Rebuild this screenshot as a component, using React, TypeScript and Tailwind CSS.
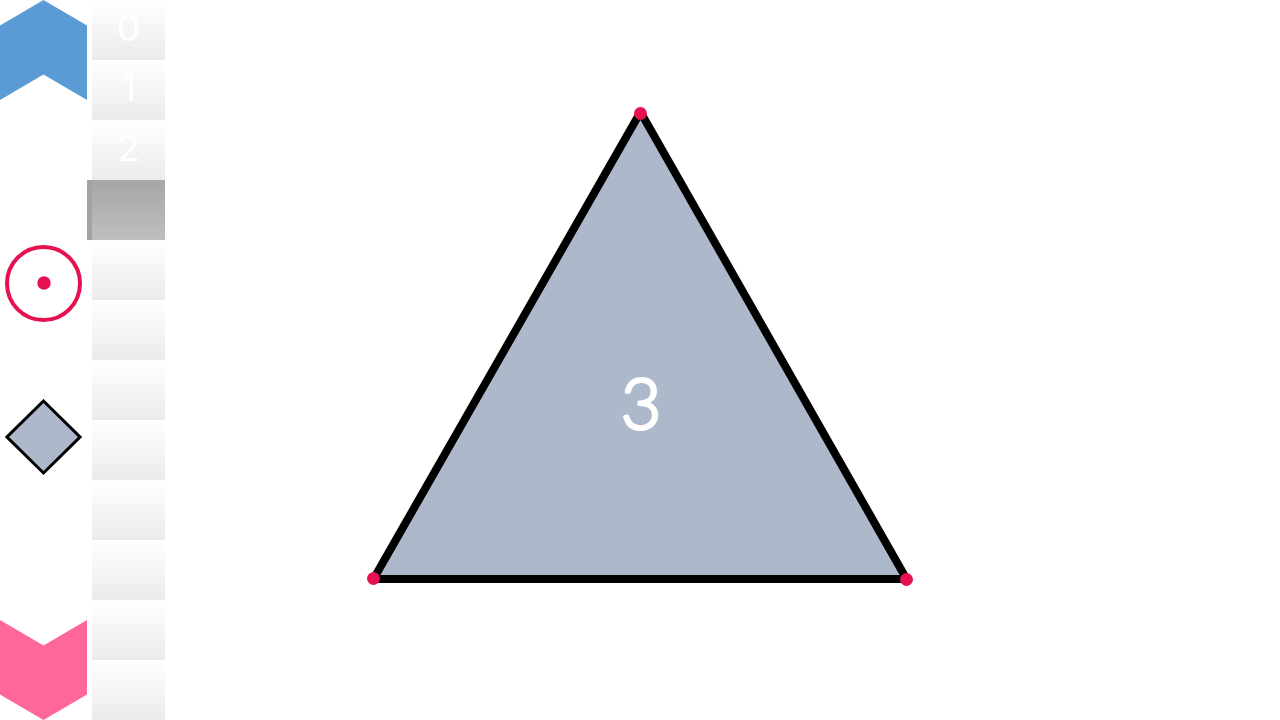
const cells = ['0', '1', '2', '3', '', '', '', '', '', '', '', ''];
const selected = 3;

function Digit({ value }: { value: string }) {
  return (
    <span className="font-['Inter',sans-serif] text-[37px] leading-none font-normal text-white">
      {value}
    </span>
  );
}

function Toolbar() {
  return (
    <nav aria-label="Tools" className="flex w-[87px] shrink-0 flex-col items-center justify-between">
      <button type="button" aria-label="Previous" className="block w-full">
        <svg viewBox="0 0 87 100" className="block w-full">
          <path d="M0 25.5 43.5 0 87 25.5V100L43.5 74.5 0 100Z" fill="#5b9bd5" />
        </svg>
      </button>
      <div className="flex flex-col gap-[77px]">
        <button type="button" aria-label="Points" className="block">
          <svg viewBox="0 0 77 77" className="block size-[77px]">
            <circle cx="38.5" cy="38.5" r="36.5" fill="#fff" stroke="#e6124f" strokeWidth="4" />
            <circle cx="39" cy="38" r="6.7" fill="#e6124f" />
          </svg>
        </button>
        <button type="button" aria-label="Shapes" className="block">
          <svg viewBox="0 0 77 77" className="block size-[77px]">
            <path d="M38.5 2 75 38 38.5 74 2 38Z" fill="#adb8cb" stroke="#000" strokeWidth="3" />
          </svg>
        </button>
      </div>
      <button type="button" aria-label="Next" className="block w-full">
        <svg viewBox="0 0 87 100" className="block w-full">
          <path d="M0 0 43.5 25.5 87 0V74.5L43.5 100 0 74.5Z" fill="#ff6699" />
        </svg>
      </button>
    </nav>
  );
}

function NumberStrip() {
  return (
    <div className="grid w-[78px] shrink-0 grid-rows-12">
      {cells.map((value, i) =>
        i === selected ? (
          <button
            key={i}
            type="button"
            aria-label={value}
            aria-pressed="true"
            className="border-l-5 border-[#a3a3a3] bg-linear-to-b from-[#a6a6a6] to-[#bfbfbf]"
          />
        ) : (
          <button
            key={i}
            type="button"
            aria-label={value || 'Empty'}
            className="ml-[5px] flex items-center justify-center bg-linear-to-b from-white to-[#ebebeb] pb-1.5"
          >
            <Digit value={value} />
          </button>
        ),
      )}
    </div>
  );
}

function Canvas() {
  const points = [
    [475.5, 113.5],
    [208.5, 578.5],
    [741.5, 579.5],
  ];
  return (
    <main className="flex min-w-0 flex-1 items-center">
      <svg viewBox="0 0 1115 720" className="block w-full" role="img" aria-label="Triangle with 3 points">
        <path d="M475.5 112 208.5 579H741.5Z" fill="#adb8cb" stroke="#000" strokeWidth="8" strokeLinejoin="bevel" />
        {points.map(([x, y]) => (
          <circle key={x} cx={x} cy={y} r="6.5" fill="#e6124f" />
        ))}
        <text
          x="476"
          y="429"
          textAnchor="middle"
          fill="#fff"
          stroke="#fff"
          strokeWidth="3"
          strokeLinejoin="round"
          className="font-['Lato',sans-serif] text-[70px] font-light"
        >
          3
        </text>
      </svg>
    </main>
  );
}

export default function App() {
  return (
    <div className="flex min-h-screen bg-white">
      <Toolbar />
      <NumberStrip />
      <Canvas />
    </div>
  );
}
